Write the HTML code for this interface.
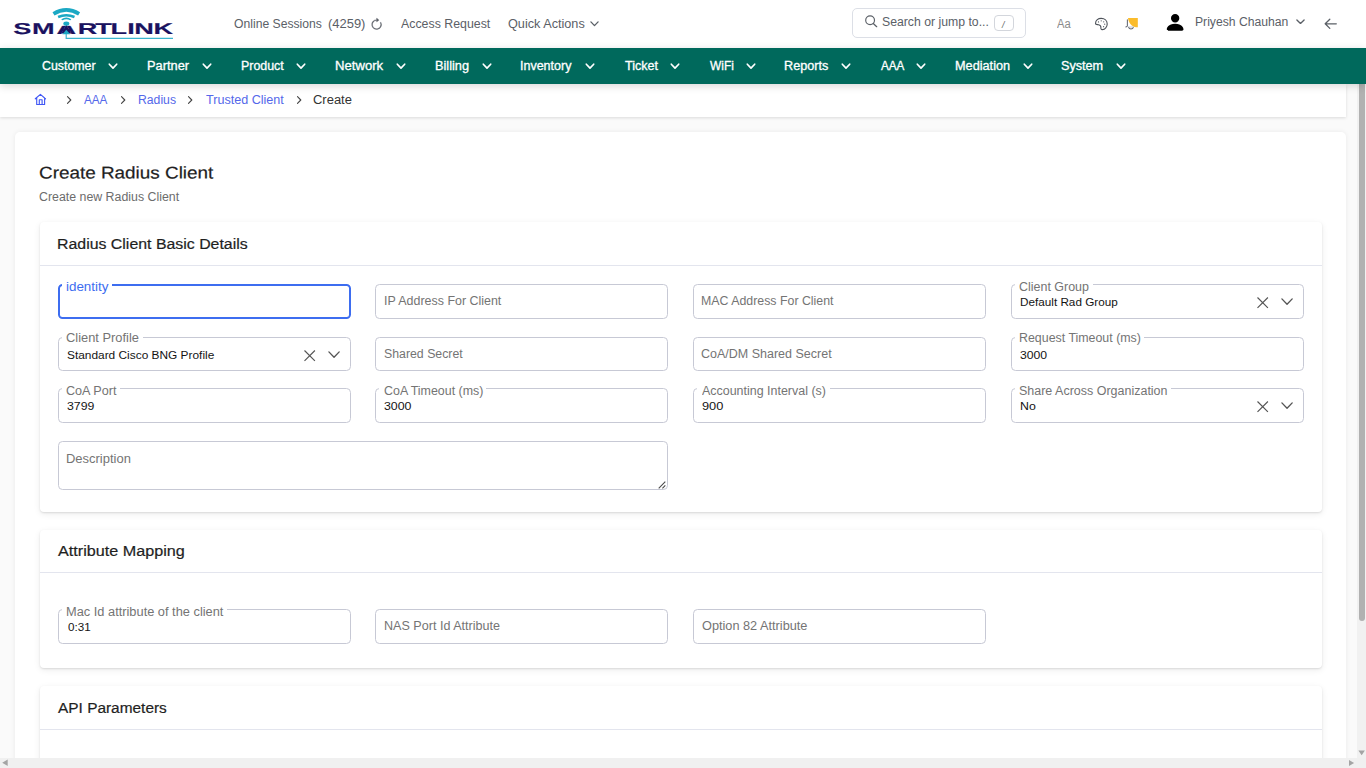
<!DOCTYPE html>
<html lang="en">
<head>
<meta charset="utf-8">
<title>Create Radius Client</title>
<style>
*{box-sizing:border-box;margin:0;padding:0}
html,body{width:1366px;height:768px;overflow:hidden;background:#fafafa;font-family:"Liberation Sans",sans-serif;color:#222}
.t{position:absolute;white-space:nowrap;line-height:16px;transform-origin:0 0;font-weight:normal;font-style:normal}
svg{position:absolute;overflow:visible}
#top{position:absolute;left:0;top:0;width:1366px;height:48px;background:#fff}
#nav{position:absolute;left:0;top:48px;width:1366px;height:36px;background:#00695c;box-shadow:0 2px 8px rgba(0,0,0,.16)}
.nc{top:63px;width:10px;height:7px}
#crumb{position:absolute;left:0;top:84px;width:1346px;height:33px;background:#fff;box-shadow:0 1px 3px rgba(0,0,0,.13)}
.sep{top:94.9px;width:7px;height:10px}
#main{position:absolute;left:15px;top:131.700px;width:1331px;height:640px;background:#fff;box-shadow:0 0 5px rgba(0,0,0,.07);border-radius:5px 5px 0 0}
.card{position:absolute;left:40px;width:1282px;background:#fff;border-radius:4px;box-shadow:0 1px 2px rgba(0,0,0,.11),0 2px 7px rgba(0,0,0,.075)}
.card i{position:absolute;left:0;right:0;top:42.500px;height:1px;background:#e3e5ee}
.f{position:absolute;border:1px solid #c7c9d5;border-radius:4.5px;background:#fff}
.f .n{position:absolute;left:3.4px;top:-1px;height:3px;background:#fff}
.f .x{left:244.800px;top:11.500px;width:12px;height:12px}
.f .d{left:268.8px;top:12.6px;width:13px;height:8px}
.f .rs{right:.6px;bottom:.3px;width:8px;height:8px}
.f.focus{border:2px solid #3d6df0}
.f.focus .n{left:2.4px;top:-2px;height:4px}
h3{font-weight:normal;font-size:inherit}
#search{position:absolute;left:852px;top:8px;width:174px;height:30px;border:1px solid #dcdfe6;border-radius:5px}
#kbd{position:absolute;left:994px;top:15px;width:20px;height:16px;border:1px solid #d3d6dc;border-radius:4px}
#sbv{position:absolute;left:1357.300px;top:84px;width:9px;height:674px;background:#f1f1f1}
#sbv b{position:absolute;left:1.400px;top:0;width:6.500px;height:536.800px;background:#b1b1b1;border-radius:0 0 3.250px 3.250px}
#sbh{position:absolute;left:0;top:758px;width:1366px;height:10px;background:#f0f0f0}
</style>
</head>
<body>
<header id="top">
<div id="logo"><svg style="left:0;top:0;width:180px;height:48px" viewBox="0 0 180 48">
<text transform="translate(0,34) scale(1.7168,1) rotate(.03)" x="7.67 18.71 32.89 45.24 55.44 64.43 74.11 78.26 89.35" y="0" font-family="Liberation Sans, sans-serif" font-weight="bold" font-size="15.8" fill="#1a1260" stroke="#1a1260" stroke-width=".15">SMARTLINK</text>
<g fill="none" stroke="#1ba8c4">
<path d="M53.5 13.8Q66.3 6 79.1 13.8" stroke-width="3.8"/>
<path d="M58.1 17Q66.3 13.3 74.5 17" stroke-width="2.5"/>
<path d="M61.8 19.9Q66.3 16.8 70.8 19.9" stroke-width="1.7"/>
</g>
<rect x="60" y="20.5" width="12.6" height="5.3" fill="#fff"/>
<path d="M66.3 24.8L71.3 33.5H61.3z" fill="#1a1260"/>
<ellipse cx="66.3" cy="23.6" rx="3" ry="2.2" fill="#1ba8c4"/>
<path d="M66.3 29.8L70.2 34.3H62.400z" fill="#1ba8c4"/>
<path d="M66.2 34v4.400H173" fill="none" stroke="#3bb5cf" stroke-width="1.2"/>
</svg></div>
<span class="t" style="left:234.30px;top:15.94px;font-size:12px;color:#5b6067;transform:scaleX(1.0140);">Online Sessions</span>
<span class="t" style="left:327.52px;top:15.94px;font-size:12px;color:#5b6067;transform:scaleX(1.0788);">(4259)</span>
<span class="t" style="left:400.60px;top:15.94px;font-size:12px;color:#5b6067;transform:scaleX(1.0299);">Access Request</span>
<span class="t" style="left:508.40px;top:15.94px;font-size:12px;color:#5b6067;transform:scaleX(1.0556);">Quick Actions</span>
<span class="t" style="left:882.38px;top:13.54px;font-size:12px;color:#5b6067;transform:scaleX(1.0204);">Search or jump to...</span>
<span class="t" style="left:1057.30px;top:15.74px;font-size:12.3px;color:#8b8b8b;transform:scaleX(0.9133);">Aa</span>
<span class="t" style="left:1194.79px;top:13.74px;font-size:12px;color:#5b6067;transform:scaleX(1.0132);">Priyesh Chauhan</span>

<svg style="left:370.300px;top:17.900px;width:13.200px;height:13.200px" viewBox="0 0 16 16" fill="#5b6067" stroke="#5b6067" stroke-width=".4"><path fill-rule="evenodd" d="M8 3a5 5 0 1 0 4.546 2.914.5.5 0 0 1 .908-.417A6 6 0 1 1 8 2z"/><path d="M8 4.466V.534a.25.25 0 0 1 .41-.192l2.36 1.966c.12.1.12.284 0 .384L8.41 4.658A.25.25 0 0 1 8 4.466"/></svg>
<svg style="left:589.5px;top:21px;width:9px;height:6px" viewBox="0 0 9 6"><path d="M.9 .9l3.6 3.7L8.1 .9" fill="none" stroke="#5b6067" stroke-width="1.35" stroke-linecap="round" stroke-linejoin="round"/></svg>
<div id="search"></div>
<svg style="left:864px;top:14px;width:14px;height:14px" viewBox="0 0 14 14"><circle cx="6.1" cy="6.2" r="4.4" fill="none" stroke="#5b6067" stroke-width="1.15"/><path d="M9.3 9.5l3.4 3.2" stroke="#5b6067" stroke-width="1.25" stroke-linecap="round"/></svg>
<div id="kbd"><span class="t" style="left:7px;top:1.800px;font-size:9px;color:#666;font-style:italic;line-height:14px">/</span></div>
<svg style="left:1094px;top:17px;width:14px;height:14px" viewBox="0 0 14 14"><path d="M1.5 6.5C1.6 3.3 4.2 1.4 7.2 1.4c3.4 0 6 2.3 6 5.5 0 3-2.2 5.5-4.8 5.7-1.4.1-1.6-1-1.5-2 .1-1.2-.5-2.4-2.3-2.8C3 7.5 1.4 7.7 1.5 6.500z" fill="none" stroke="#4e535a" stroke-width="1.1" stroke-linejoin="round"/><g fill="#4e535a"><circle cx="4.5" cy="4.9" r=".6"/><circle cx="7.2" cy="3.8" r=".6"/><circle cx="9.7" cy="4.8" r=".6"/><circle cx="10.7" cy="7.2" r=".6"/><circle cx="9.6" cy="9.7" r=".6"/></g></svg>
<svg style="left:1124px;top:16px;width:16px;height:15px" viewBox="0 0 16 15"><path d="M3.4 3.8v6.3l-1.5.9" fill="none" stroke="#6a6f78" stroke-width="1.1" stroke-linecap="round" stroke-linejoin="round"/><path d="M4.6 11.3c.5 1.3 1.3 1.7 2.4 1.7s1.900-.4 2.400-1.700" fill="none" stroke="#6a6f78" stroke-width="1.2" stroke-linecap="round"/><path d="M4.700 11.000h5" stroke="#c6c9cf" stroke-width="1"/><path d="M4 1.900h9.800v9.400h-1.400C7.600 10.400 4.700 7.200 4 1.900z" fill="#fbbc2c"/></svg>
<svg style="left:1164px;top:10.800px;width:22.3px;height:22.800px" viewBox="0 0 16 16" fill="#000"><path d="M3 14s-1 0-1-1 1-4 6-4 6 3 6 4-1 1-1 1zm5-6a3 3 0 1 0 0-6 3 3 0 0 0 0 6"/></svg>
<svg style="left:1296.300px;top:19.100px;width:9px;height:6px" viewBox="0 0 9 6"><path d="M.9 .9l3.600 3.500L8.100 .9" fill="none" stroke="#5b6067" stroke-width="1.350" stroke-linecap="round" stroke-linejoin="round"/></svg>
<svg style="left:1324px;top:18px;width:14px;height:12px" viewBox="0 0 14 12"><path d="M12.300 5.800H1.400M5.800 1.200L1.200 5.800l4.600 4.600" fill="none" stroke="#5b6067" stroke-width="1.300" stroke-linecap="round" stroke-linejoin="round"/></svg>

</header>
<div id="crumb"></div>
<svg style="left:34px;top:93px;width:13px;height:13px" viewBox="0 0 13 13"><path d="M1.300 5.800L6.400 1.400l5.100 4.400M2.700 4.900v6.600h7.900V4.900M5.300 11.500V6.700h2.800v4.800" fill="none" stroke="#4158f5" stroke-width="1.150" stroke-linecap="round" stroke-linejoin="round"/></svg>
<svg class="sep" style="left:65.8px" viewBox="0 0 7 10"><path d="M1.500 1.600l3.300 3.400-3.300 3.400" fill="none" stroke="#444" stroke-width="1.100" stroke-linecap="round" stroke-linejoin="round"/></svg><svg class="sep" style="left:120.1px" viewBox="0 0 7 10"><path d="M1.500 1.600l3.300 3.400-3.300 3.400" fill="none" stroke="#444" stroke-width="1.100" stroke-linecap="round" stroke-linejoin="round"/></svg><svg class="sep" style="left:187.3px" viewBox="0 0 7 10"><path d="M1.500 1.600l3.300 3.400-3.300 3.400" fill="none" stroke="#444" stroke-width="1.100" stroke-linecap="round" stroke-linejoin="round"/></svg><svg class="sep" style="left:295.6px" viewBox="0 0 7 10"><path d="M1.500 1.600l3.300 3.400-3.300 3.400" fill="none" stroke="#444" stroke-width="1.100" stroke-linecap="round" stroke-linejoin="round"/></svg>
<span class="t" style="left:84.20px;top:92.04px;font-size:12px;color:#5468ea;transform:scaleX(0.9750);">AAA</span>
<span class="t" style="left:137.98px;top:92.04px;font-size:12px;color:#5468ea;transform:scaleX(1.0167);">Radius</span>
<span class="t" style="left:206.20px;top:92.04px;font-size:12px;color:#5468ea;transform:scaleX(1.0486);">Trusted Client</span>
<span class="t" style="left:312.62px;top:92.04px;font-size:12px;color:#333;transform:scaleX(1.0800);">Create</span>
<main id="main"></main>
<span class="t" style="left:39.09px;top:165px;font-size:17px;color:#1f1f1f;transform:translateY(0.41px) scaleX(1.1115) rotate(.03deg);-webkit-text-stroke:.22px #1f1f1f;">Create Radius Client</span>
<span class="t" style="left:38.97px;top:188.84px;font-size:12px;color:#6c6c6c;transform:scaleX(1.0296);">Create new Radius Client</span>
<section class="card" style="top:222.300px;height:289.600px"><i></i></section>
<section class="card" style="top:529.600px;height:138.300px"><i></i></section>
<section class="card" style="top:686.400px;height:100px"><i></i></section>
<span class="t" style="left:56.97px;top:235.85px;font-size:14px;color:#1f1f1f;transform:scaleX(1.1347);-webkit-text-stroke:.2px #1f1f1f;">Radius Client Basic Details</span>
<span class="t" style="left:58.10px;top:543.15px;font-size:14px;color:#1f1f1f;transform:scaleX(1.1560);-webkit-text-stroke:.2px #1f1f1f;">Attribute Mapping</span>
<span class="t" style="left:58.10px;top:699.85px;font-size:14px;color:#1f1f1f;transform:scaleX(1.1010);-webkit-text-stroke:.2px #1f1f1f;">API Parameters</span>
<div class="f focus" style="left:58px;top:284px;width:293px;height:35px"><i class="n" style="width:49.8px"></i></div>
<div class="f" style="left:375px;top:284px;width:293px;height:35px"></div>
<div class="f" style="left:693px;top:284px;width:293px;height:35px"></div>
<div class="f" style="left:1011px;top:284px;width:293px;height:35px"><i class="n" style="width:77.6px"></i><svg class="x" viewBox="0 0 12 12"><path d="M.5.5l10.400 10.400M10.900.5L.5 10.900" stroke="#555" stroke-width="1.150" fill="none"/></svg><svg class="d" viewBox="0 0 13 8"><path d="M.9.9l5.150 5.300L11.200.9" stroke="#555" stroke-width="1.350" fill="none" stroke-linecap="round" stroke-linejoin="round"/></svg></div>
<div class="f" style="left:58px;top:337px;width:293px;height:34px"><i class="n" style="width:80.6px"></i><svg class="x" viewBox="0 0 12 12"><path d="M.5.5l10.400 10.400M10.900.5L.5 10.900" stroke="#555" stroke-width="1.150" fill="none"/></svg><svg class="d" viewBox="0 0 13 8"><path d="M.9.9l5.150 5.300L11.200.9" stroke="#555" stroke-width="1.350" fill="none" stroke-linecap="round" stroke-linejoin="round"/></svg></div>
<div class="f" style="left:375px;top:337px;width:293px;height:34px"></div>
<div class="f" style="left:693px;top:337px;width:293px;height:34px"></div>
<div class="f" style="left:1011px;top:337px;width:293px;height:34px"><i class="n" style="width:128.8px"></i></div>
<div class="f" style="left:58px;top:388px;width:293px;height:35px"><i class="n" style="width:57.9px"></i></div>
<div class="f" style="left:375px;top:388px;width:293px;height:35px"><i class="n" style="width:106.8px"></i></div>
<div class="f" style="left:693px;top:388px;width:293px;height:35px"><i class="n" style="width:132.3px"></i></div>
<div class="f" style="left:1011px;top:388px;width:293px;height:35px"><i class="n" style="width:155.6px"></i><svg class="x" viewBox="0 0 12 12"><path d="M.5.5l10.400 10.400M10.900.5L.5 10.900" stroke="#555" stroke-width="1.150" fill="none"/></svg><svg class="d" viewBox="0 0 13 8"><path d="M.9.9l5.150 5.300L11.200.9" stroke="#555" stroke-width="1.350" fill="none" stroke-linecap="round" stroke-linejoin="round"/></svg></div>
<div class="f" style="left:58px;top:441px;width:610px;height:49px"><svg class="rs" viewBox="0 0 8 8"><path d="M7.3.7L.7 7.3M7.3 4.4L4.4 7.3" stroke="#4a4a4a" stroke-width="1.1" fill="none"/></svg></div>
<div class="f" style="left:58px;top:609px;width:293px;height:35px"><i class="n" style="width:164.8px"></i></div>
<div class="f" style="left:375px;top:609px;width:293px;height:35px"></div>
<div class="f" style="left:693px;top:609px;width:293px;height:35px"></div>
<span class="t" style="left:65.68px;top:278.64px;font-size:12px;color:#3d6df0;transform:scaleX(1.1162);">identity</span>
<span class="t" style="left:1018.76px;top:278.64px;font-size:12px;color:#747474;transform:scaleX(1.0379);">Client Group</span>
<span class="t" style="left:65.73px;top:329.74px;font-size:12px;color:#747474;transform:scaleX(1.0716);">Client Profile</span>
<span class="t" style="left:1018.97px;top:329.74px;font-size:12px;color:#747474;transform:scaleX(1.0328);">Request Timeout (ms)</span>
<span class="t" style="left:65.75px;top:382.74px;font-size:12px;color:#747474;transform:scaleX(1.0511);">CoA Port</span>
<span class="t" style="left:383.76px;top:382.74px;font-size:12px;color:#747474;transform:scaleX(1.0351);">CoA Timeout (ms)</span>
<span class="t" style="left:702.00px;top:382.74px;font-size:12px;color:#747474;transform:scaleX(1.0378);">Accounting Interval (s)</span>
<span class="t" style="left:1018.76px;top:382.54px;font-size:12px;color:#747474;transform:scaleX(1.0404);">Share Across Organization</span>
<span class="t" style="left:66.23px;top:603.74px;font-size:12px;color:#747474;transform:scaleX(1.0678);">Mac Id attribute of the client</span>
<span class="t" style="left:383.76px;top:292.84px;font-size:12px;color:#747474;transform:scaleX(1.0366);">IP Address For Client</span>
<span class="t" style="left:701.37px;top:292.84px;font-size:12px;color:#747474;transform:scaleX(1.0297);">MAC Address For Client</span>
<span class="t" style="left:383.77px;top:345.84px;font-size:12px;color:#747474;transform:scaleX(1.0263);">Shared Secret</span>
<span class="t" style="left:700.96px;top:345.84px;font-size:12px;color:#747474;transform:scaleX(1.0419);">CoA/DM Shared Secret</span>
<span class="t" style="left:66.02px;top:450.54px;font-size:12px;color:#747474;transform:scaleX(1.0810);">Description</span>
<span class="t" style="left:383.75px;top:617.64px;font-size:12px;color:#747474;transform:scaleX(1.0477);">NAS Port Id Attribute</span>
<span class="t" style="left:702.00px;top:617.64px;font-size:12px;color:#747474;transform:scaleX(1.0606);">Option 82 Attribute</span>
<span class="t" style="left:1019.80px;top:293.65px;font-size:11.7px;color:#141414;transform:scaleX(1.0031);">Default Rad Group</span>
<span class="t" style="left:66.58px;top:346.65px;font-size:11.7px;color:#141414;transform:scaleX(1.0168);">Standard Cisco BNG Profile</span>
<span class="t" style="left:1019.76px;top:346.65px;font-size:11.7px;color:#141414;transform:scaleX(1.0440);">3000</span>
<span class="t" style="left:66.55px;top:397.65px;font-size:11.7px;color:#141414;transform:scaleX(1.0520);">3799</span>
<span class="t" style="left:384.44px;top:397.65px;font-size:11.7px;color:#141414;transform:scaleX(1.0560);">3000</span>
<span class="t" style="left:702.01px;top:397.65px;font-size:11.7px;color:#141414;transform:scaleX(1.0944);">900</span>
<span class="t" style="left:1019.74px;top:397.65px;font-size:11.7px;color:#141414;transform:scaleX(1.0571);">No</span>
<span class="t" style="left:67.60px;top:618.85px;font-size:11.7px;color:#141414;transform:scaleX(0.9955);">0:31</span>
<div id="sbv"><b></b></div>
<div id="sbh"></div>
<svg style="left:0;top:748px;width:1366px;height:20px" viewBox="0 748 1366 20" fill="#a4a4a4"><path d="M1358.400 750.500h6.500l-3.250 4.700zM1349 759.900l5.100 3.100-5.100 3.100zM7.700 759.500v6.600l-5.500-3.300z"/></svg>
<nav id="nav"></nav>
<span class="t" style="left:42.00px;top:57.84px;font-size:12px;color:#fff;transform:scaleX(1.0308);-webkit-text-stroke:.3px #fff;">Customer</span>
<span class="t" style="left:147.33px;top:57.84px;font-size:12px;color:#fff;transform:scaleX(1.0684);-webkit-text-stroke:.3px #fff;">Partner</span>
<span class="t" style="left:240.57px;top:57.84px;font-size:12px;color:#fff;transform:scaleX(1.0341);-webkit-text-stroke:.3px #fff;">Product</span>
<span class="t" style="left:335.31px;top:57.84px;font-size:12px;color:#fff;transform:scaleX(1.0930);-webkit-text-stroke:.3px #fff;">Network</span>
<span class="t" style="left:434.94px;top:57.84px;font-size:12px;color:#fff;transform:scaleX(1.0645);-webkit-text-stroke:.3px #fff;">Billing</span>
<span class="t" style="left:520.36px;top:57.84px;font-size:12px;color:#fff;transform:scaleX(1.0408);-webkit-text-stroke:.3px #fff;">Inventory</span>
<span class="t" style="left:624.60px;top:57.84px;font-size:12px;color:#fff;transform:scaleX(1.0437);-webkit-text-stroke:.3px #fff;">Ticket</span>
<span class="t" style="left:709.60px;top:57.84px;font-size:12px;color:#fff;transform:scaleX(0.9917);-webkit-text-stroke:.3px #fff;">WiFi</span>
<span class="t" style="left:784.35px;top:57.84px;font-size:12px;color:#fff;transform:scaleX(1.0537);-webkit-text-stroke:.3px #fff;">Reports</span>
<span class="t" style="left:880.60px;top:57.84px;font-size:12px;color:#fff;transform:scaleX(0.9750);-webkit-text-stroke:.3px #fff;">AAA</span>
<span class="t" style="left:955.34px;top:57.84px;font-size:12px;color:#fff;transform:scaleX(1.0588);-webkit-text-stroke:.3px #fff;">Mediation</span>
<span class="t" style="left:1060.95px;top:57.84px;font-size:12px;color:#fff;transform:scaleX(1.0513);-webkit-text-stroke:.3px #fff;">System</span>
<svg class="nc" style="left:108.1px" viewBox="0 0 10 7"><path d="M1.300 1.200l3.700 3.900 3.700-3.900" fill="none" stroke="#fff" stroke-width="1.650" stroke-linecap="round" stroke-linejoin="round"/></svg><svg class="nc" style="left:201.5px" viewBox="0 0 10 7"><path d="M1.300 1.200l3.700 3.900 3.700-3.900" fill="none" stroke="#fff" stroke-width="1.650" stroke-linecap="round" stroke-linejoin="round"/></svg><svg class="nc" style="left:296.1px" viewBox="0 0 10 7"><path d="M1.300 1.200l3.700 3.900 3.700-3.900" fill="none" stroke="#fff" stroke-width="1.650" stroke-linecap="round" stroke-linejoin="round"/></svg><svg class="nc" style="left:395.9px" viewBox="0 0 10 7"><path d="M1.300 1.200l3.700 3.900 3.700-3.900" fill="none" stroke="#fff" stroke-width="1.650" stroke-linecap="round" stroke-linejoin="round"/></svg><svg class="nc" style="left:481.5px" viewBox="0 0 10 7"><path d="M1.300 1.200l3.700 3.900 3.700-3.900" fill="none" stroke="#fff" stroke-width="1.650" stroke-linecap="round" stroke-linejoin="round"/></svg><svg class="nc" style="left:584.9px" viewBox="0 0 10 7"><path d="M1.300 1.200l3.700 3.900 3.700-3.900" fill="none" stroke="#fff" stroke-width="1.650" stroke-linecap="round" stroke-linejoin="round"/></svg><svg class="nc" style="left:670.1px" viewBox="0 0 10 7"><path d="M1.300 1.200l3.700 3.900 3.700-3.900" fill="none" stroke="#fff" stroke-width="1.650" stroke-linecap="round" stroke-linejoin="round"/></svg><svg class="nc" style="left:745.5px" viewBox="0 0 10 7"><path d="M1.300 1.200l3.700 3.900 3.700-3.900" fill="none" stroke="#fff" stroke-width="1.650" stroke-linecap="round" stroke-linejoin="round"/></svg><svg class="nc" style="left:840.9px" viewBox="0 0 10 7"><path d="M1.300 1.200l3.700 3.900 3.700-3.900" fill="none" stroke="#fff" stroke-width="1.650" stroke-linecap="round" stroke-linejoin="round"/></svg><svg class="nc" style="left:916.1px" viewBox="0 0 10 7"><path d="M1.300 1.200l3.700 3.900 3.700-3.900" fill="none" stroke="#fff" stroke-width="1.650" stroke-linecap="round" stroke-linejoin="round"/></svg><svg class="nc" style="left:1022.5px" viewBox="0 0 10 7"><path d="M1.300 1.200l3.700 3.900 3.700-3.900" fill="none" stroke="#fff" stroke-width="1.650" stroke-linecap="round" stroke-linejoin="round"/></svg><svg class="nc" style="left:1115.5px" viewBox="0 0 10 7"><path d="M1.300 1.200l3.700 3.900 3.700-3.900" fill="none" stroke="#fff" stroke-width="1.650" stroke-linecap="round" stroke-linejoin="round"/></svg>
</body>
</html>
